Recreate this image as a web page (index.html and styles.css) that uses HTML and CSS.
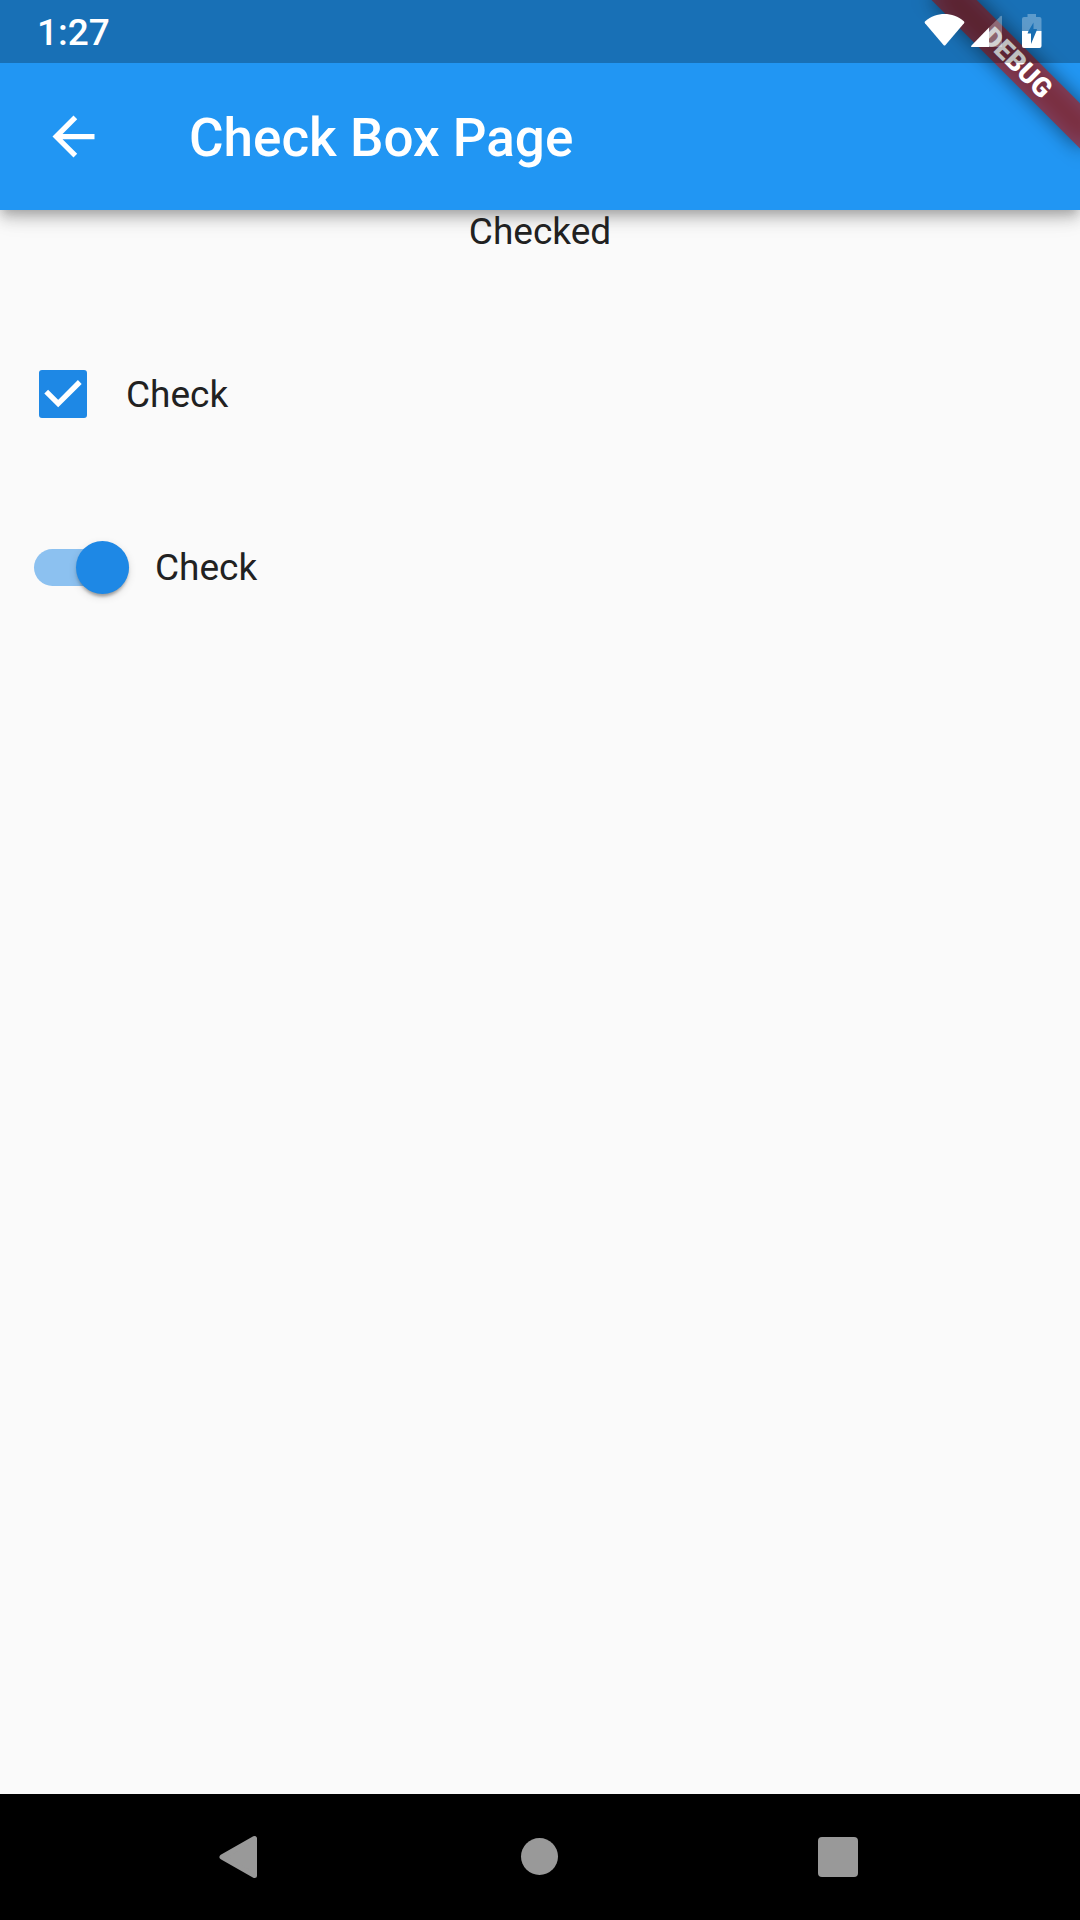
FILE: index.html
```html
<!DOCTYPE html>
<html lang="en">
<head>
  <meta charset="utf-8">
  <meta name="viewport" content="width=device-width, initial-scale=1">
  <title>Check Box Page</title>
  <link rel="stylesheet" href="styles.css">
</head>
<body>
  <div class="app">
    <header class="top">
      <div class="status-bar">
        <time class="clock">1:27</time>
        <div class="status-icons">
          <svg class="wifi" viewBox="0 0 42 36" aria-hidden="true">
            <path d="M1.200 8.200C12.500-1.400 28.500-1.400 39.800 8.200Q40.800 9.200 40 10.200L21.500 32Q20.500 33 19.500 32L1 10.200Q.2 9.200 1.200 8.200Z" fill="#fff"/>
          </svg>
          <svg class="signal" viewBox="0 0 32 36" aria-hidden="true">
            <path d="M18 14.500 29.500 3.200Q31 2 31 4V34H18Z" fill="#fff" fill-opacity=".3"/>
            <path d="M18 14.500V34H1Q-.5 34 .5 32.500Z" fill="#fff"/>
          </svg>
          <svg class="battery" viewBox="0 0 20 36" aria-hidden="true">
            <path d="M5.500 1H14V4H17.500Q19.500 4 19.500 6V18H14.500L15 16H11.500V9.500L6.500 18H0V6Q0 4 2 4H5.500Z" fill="#fff" fill-opacity=".3"/>
            <path d="M0 18H6.500L5.500 20.500H9V31L14.500 18H19.500V33Q19.500 35 17.500 35H2Q0 35 0 33Z" fill="#fff"/>
          </svg>
        </div>
      </div>
      <div class="app-bar">
        <button class="back" type="button" aria-label="Back">
          <svg viewBox="0 0 24 24" width="63" height="63" aria-hidden="true">
            <path d="M20 11H7.830l5.590-5.590L12 4l-8 8 8 8 1.410-1.410L7.830 13H20v-2z" fill="#fff"/>
          </svg>
        </button>
        <h1 class="title">Check Box Page</h1>
      </div>
      <div class="banner-clip">
        <div class="banner">DEBUG</div>
      </div>
    </header>

    <main class="content">
      <p class="state">Checked</p>
      <div class="row">
        <span class="check-cell">
          <input class="checkbox" type="checkbox" id="check-box" checked>
          <svg class="tick" viewBox="0 0 18 18" aria-hidden="true">
            <path d="M2.700 8.100 7.200 12.600 15.300 4.500" fill="none" stroke="#fff" stroke-width="2"/>
          </svg>
        </span>
        <label for="check-box">Check</label>
      </div>
      <div class="row">
        <span class="switch-cell">
          <input class="switch" type="checkbox" role="switch" id="check-switch" checked>
        </span>
        <label for="check-switch">Check</label>
      </div>
    </main>

    <nav class="nav-bar" aria-label="System">
      <button type="button" aria-label="Back">
        <svg viewBox="0 0 48 48" width="48" height="48" aria-hidden="true">
          <path d="M6 24 38.500 5.500V42.500Z" fill="#999" stroke="#999" stroke-width="5" stroke-linejoin="round"/>
        </svg>
      </button>
      <button type="button" aria-label="Home">
        <svg viewBox="0 0 48 48" width="48" height="48" aria-hidden="true">
          <circle cx="23.500" cy="23.500" r="18.500" fill="#999"/>
        </svg>
      </button>
      <button type="button" aria-label="Recent apps">
        <svg viewBox="0 0 48 48" width="48" height="48" aria-hidden="true">
          <rect x="2" y="4" width="40" height="40" rx="4" fill="#999"/>
        </svg>
      </button>
    </nav>
  </div>
</body>
</html>
```

FILE: styles.css
```css
* {
  box-sizing: border-box;
}

body {
  margin: 0;
  background: #fafafa;
  color: #212121;
  font-family: Roboto, "Noto Sans", sans-serif;
  font-size: 37px;
  line-height: 44px;
}

button {
  display: flex;
  align-items: center;
  justify-content: center;
  margin: 0;
  padding: 0;
  border: 0;
  background: none;
  cursor: pointer;
}

.app {
  display: flex;
  flex-direction: column;
  min-height: 100vh;
}

/* Status bar and app bar */
.top {
  position: relative;
  background: #2196f3;
  color: #fff;
  box-shadow:
    0 5px 10px -3px rgba(0, 0, 0, .2),
    0 10px 13px 0 rgba(0, 0, 0, .14),
    0 3px 26px 0 rgba(0, 0, 0, .12);
}

.status-bar {
  position: relative;
  z-index: 2;
  display: flex;
  align-items: flex-start;
  justify-content: space-between;
  height: 63px;
  padding: 0 38px 0 37px;
  background: rgba(0, 0, 0, .25);
}

.clock {
  padding-top: 11px;
  font-weight: 500;
}

.status-icons {
  display: flex;
  padding-top: 13px;
}

.status-icons svg {
  height: 36px;
}

.wifi {
  width: 42px;
  margin-right: 5px;
}

.signal {
  width: 32px;
  margin-right: 19px;
}

.battery {
  width: 20px;
}

.app-bar {
  display: flex;
  align-items: center;
  gap: 42px;
  height: 147px;
}

.back {
  width: 147px;
  height: 147px;
}

.title {
  margin: 0;
  padding-top: 2px;
  font-size: 53px;
  font-weight: 500;
  line-height: 62px;
}

/* Corner ribbon */
.banner-clip {
  position: absolute;
  top: 0;
  right: 0;
  z-index: 1;
  width: 200px;
  height: 200px;
  overflow: hidden;
  pointer-events: none;
}

.banner {
  position: absolute;
  top: 73px;
  left: 95px;
  width: 210px;
  height: 32px;
  transform: rotate(45deg);
  transform-origin: 105px -73px;
  font-size: 27px;
  font-weight: 900;
  line-height: 32px;
  text-align: center;
}

.banner::before,
.banner::after {
  content: "";
  position: absolute;
  inset: 0;
  z-index: -1;
}

.banner::before {
  background: rgba(0, 0, 0, .5);
  filter: blur(10px);
}

.banner::after {
  background: rgba(183, 28, 28, .63);
}

/* Page content */
.content {
  flex: 1;
  position: relative;
}

.state {
  margin: 0 0 77px;
  text-align: center;
}

.row {
  display: flex;
  align-items: center;
  height: 126px;
  margin-bottom: 47px;
}

.row label {
  padding-top: 2px;
}

.check-cell {
  display: grid;
  place-items: center;
  width: 126px;
}

.checkbox,
.tick {
  grid-area: 1 / 1;
  width: 48px;
  height: 48px;
}

.checkbox {
  appearance: none;
  margin: 0;
  border: 5px solid #757575;
  border-radius: 3px;
}

.checkbox:checked {
  border-color: #1e88e5;
  background: #1e88e5;
}

.tick {
  visibility: hidden;
  pointer-events: none;
}

.checkbox:checked + .tick {
  visibility: visible;
}

.switch-cell {
  display: flex;
  width: 155px;
  padding-left: 34px;
}

.switch {
  appearance: none;
  display: flex;
  align-items: center;
  width: 95px;
  height: 37px;
  margin: 0;
  border-radius: 19px;
  background: rgba(0, 0, 0, .38);
}

.switch::before {
  content: "";
  width: 53px;
  height: 53px;
  border-radius: 50%;
  background: #fafafa;
  box-shadow:
    0 5px 3px -3px rgba(0, 0, 0, .2),
    0 3px 3px 0 rgba(0, 0, 0, .14),
    0 3px 8px 0 rgba(0, 0, 0, .12);
}

.switch:checked {
  justify-content: flex-end;
  background: rgba(30, 136, 229, .5);
}

.switch:checked::before {
  background: #1e88e5;
}

/* System navigation */
.nav-bar {
  display: grid;
  grid-template-columns: repeat(3, 1fr);
  height: 126px;
  padding: 0 90px;
  background: #000;
}
```
